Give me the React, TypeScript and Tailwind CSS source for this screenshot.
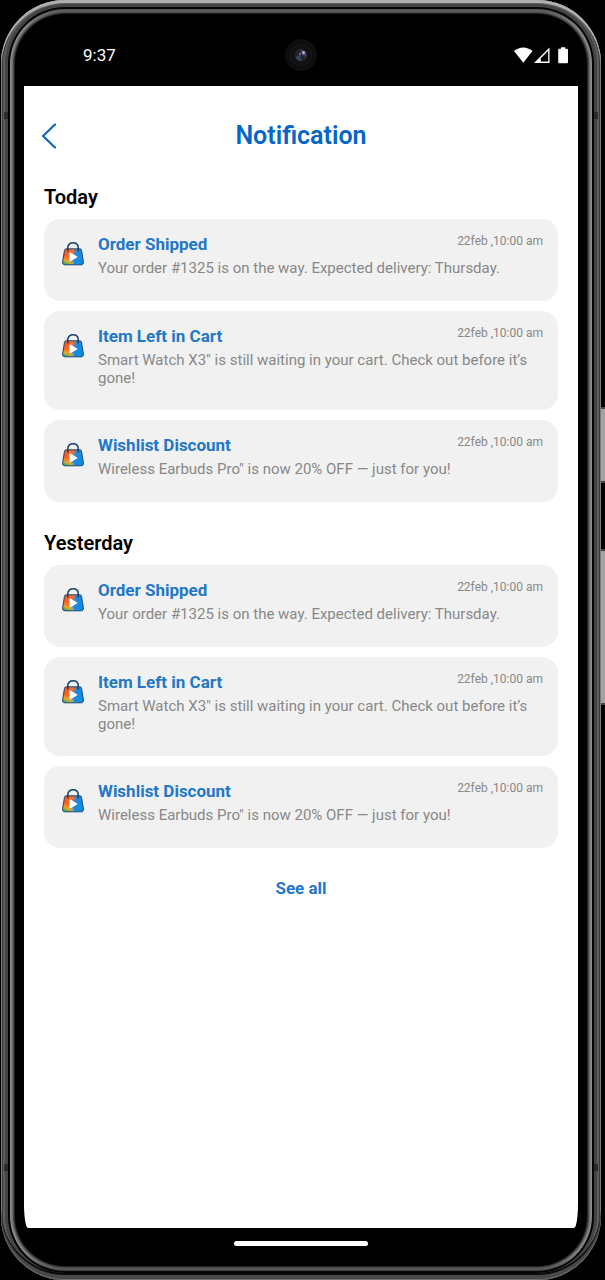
import React from "react";

type Notice = { title: string; body: string; time: string };
type Group = { day: string; items: Notice[] };

const notices: Notice[] = [
  {
    title: "Order Shipped",
    body: "Your order #1325 is on the way. Expected delivery: Thursday.",
    time: "22feb ,10:00 am",
  },
  {
    title: "Item Left in Cart",
    body: "Smart Watch X3\" is still waiting in your cart. Check out before it’s gone!",
    time: "22feb ,10:00 am",
  },
  {
    title: "Wishlist Discount",
    body: "Wireless Earbuds Pro\" is now 20% OFF — just for you!",
    time: "22feb ,10:00 am",
  },
];

const groups: Group[] = [
  { day: "Today", items: notices },
  { day: "Yesterday", items: notices },
];

function BagIcon() {
  return (
    <svg viewBox="0 0 22 24" className="h-6 w-[22px]" aria-hidden="true">
      <defs>
        <linearGradient id="bagBase" x1="0" y1="0.2" x2="1" y2="0.5">
          <stop offset="0" stopColor="#f4511e" />
          <stop offset="0.42" stopColor="#f9702a" />
          <stop offset="0.62" stopColor="#2187dd" />
          <stop offset="1" stopColor="#0a8fe8" />
        </linearGradient>
        <linearGradient id="bagGlow" x1="0.6" y1="0" x2="0.3" y2="1">
          <stop offset="0.5" stopColor="#f9b21a" stopOpacity="0" />
          <stop offset="0.8" stopColor="#d9b52c" stopOpacity="0.85" />
          <stop offset="1" stopColor="#23a96b" />
        </linearGradient>
      </defs>
      <path
        d="M4.300 6.800h13.400c1 0 1.600.5 1.800 1.400l1.900 11.700c.2 1.800-.7 2.900-2.400 2.900H3c-1.700 0-2.600-1.100-2.400-2.900l1.900-11.700c.2-.9.8-1.400 1.800-1.400z"
        fill="url(#bagBase)"
      />
      <path d="M3 7.500h7.500l1.500 15H3c-1.700 0-2.400-1.100-2.200-2.600z" fill="url(#bagGlow)" />
      <path
        d="M4.300 6.800h13.400c1 0 1.600.5 1.800 1.400l1.900 11.700c.2 1.800-.7 2.900-2.400 2.900H3c-1.700 0-2.600-1.100-2.400-2.900l1.900-11.700c.2-.9.8-1.400 1.800-1.400z"
        fill="none"
        stroke="#1c4a78"
        strokeWidth="1"
      />
      <path d="M5.800 9V5.600C5.800 2.600 8 .8 11 .8s5.200 1.800 5.200 4.800V9" fill="none" stroke="#143f70" strokeWidth="1.500" strokeLinecap="round" />
      <path d="M7.500 11v7.800c0 .6.500.8 1 .5l6.500-3.800c.5-.3.500-.8 0-1.100l-6.500-3.900c-.5-.3-1 0-1 .5z" fill="#fff" />
    </svg>
  );
}

function StatusBar() {
  return (
    <header className="grid h-[86px] grid-cols-3 items-center px-[9px] pt-6 pb-0 text-white">
      <time className="pl-[50px] text-[17px] leading-[62px]">9:37</time>
      <svg viewBox="0 0 34 34" className="h-[34px] w-[34px] justify-self-center" aria-hidden="true">
        <circle cx="17" cy="17" r="16" fill="#0e0e0e" />
        <circle cx="17" cy="17" r="10.500" fill="#111" stroke="#1c1c1c" strokeWidth="0.800" />
        <circle cx="17" cy="17" r="6.500" fill="#20232c" />
        <path d="M11.500 19a6 6 0 0 0 6 4l-1-6z" fill="#2e4a5c" />
        <path d="M16.500 12a6 6 0 0 1 6 7l-4-1z" fill="#4a3f66" />
        <circle cx="19.500" cy="14.500" r="1.500" fill="#b9b0cf" />
        <circle cx="16" cy="16" r="1.200" fill="#6b6488" />
      </svg>
      <svg viewBox="0 0 55 17" className="h-[17px] w-[55px] justify-self-end" aria-label="Wi-Fi, signal, battery" role="img">
        <path d="M0 4C5.500-.8 13-.8 18.500 4L9.300 15.700z" fill="#fff" />
        <path d="M35.500.5V16H20z" fill="#fff" />
        <path d="M34.200 3.800v10.800h-7.400V11.200z" fill="#000" />
        <path d="M47 .3h4.200v1.500h1.500c.8 0 1.300.5 1.300 1.300V15c0 .8-.5 1.300-1.300 1.300h-7.200c-.8 0-1.300-.5-1.300-1.300V3.100c0-.8.500-1.300 1.300-1.300H47z" fill="#fff" />
      </svg>
    </header>
  );
}

function NoticeCard({ title, body, time }: Notice) {
  return (
    <li className="flex min-h-[82px] items-start gap-3.5 rounded-2xl bg-[#f1f1f1] pt-3.5 pr-[15px] pb-[23px] pl-[18px]">
      <div className="pt-[9px]">
        <BagIcon />
      </div>
      <div className="min-w-0 flex-1">
        <div className="flex items-start justify-between">
          <h3 className="text-[17px] leading-[22px] font-bold text-[#1f78c8]">{title}</h3>
          <time className="text-[12px] leading-4 text-[#888]">{time}</time>
        </div>
        <p className="pt-1 text-[15px] leading-[18px] text-[#888]">{body}</p>
      </div>
    </li>
  );
}

export default function App() {
  return (
    <div className="relative min-h-screen bg-black pr-1 pl-px font-[Roboto,sans-serif]">
      <span className="absolute top-[407px] right-0 h-[76px] w-1 border-y-2 border-[#444] bg-[#a2a2a2]" />
      <span className="absolute top-[549px] right-0 h-[156px] w-1 border-y-2 border-[#444] bg-[#a2a2a2]" />
      <div className="relative flex min-h-screen flex-col rounded-[64px] bg-black px-[23px] shadow-[inset_0_3px_0_#b0b0b0,inset_0_-1px_0_#707070,inset_0_-5px_0_#484848,inset_0_-7px_0_#0a0a0a,inset_0_0_0_1px_#7c7c7c,inset_0_0_0_2px_#3a3a3a,inset_0_0_0_4px_#5e5e5e,inset_0_0_0_7px_#444,inset_0_0_0_9px_#050505,inset_0_-13px_3px_-2px_#3c3c3c,inset_0_13px_3px_-2px_#4a4a4a,inset_0_0_0_10px_#8d8d8d,inset_0_0_0_11px_#808080,inset_0_0_0_12px_#6a6a6a,inset_0_0_0_13px_#484848,inset_0_0_0_14px_#222]">
        <span className="absolute top-28 left-[3px] h-[7px] w-1 bg-[#2c2c2c]" />
        <span className="absolute top-28 right-[3px] h-[7px] w-1 bg-[#2c2c2c]" />
        <span className="absolute bottom-[109px] left-[3px] h-[7px] w-1 bg-[#2c2c2c]" />
        <span className="absolute right-[3px] bottom-[109px] h-[7px] w-1 bg-[#2c2c2c]" />
        <StatusBar />
        <div className="flex flex-1 flex-col bg-white px-5 [border-bottom-left-radius:4px_24px] [border-bottom-right-radius:4px_24px]">
          <div className="grid grid-cols-[1fr_auto_1fr] items-center pt-8 pb-0.5">
            <button type="button" aria-label="Back" className="-ml-1 w-6">
              <svg viewBox="0 0 24 36" className="h-9 w-6" fill="none" stroke="#0d66bd" strokeWidth="2.200" strokeLinecap="round" strokeLinejoin="round" aria-hidden="true">
                <path d="M15 6.500 3 18l12 11.500" />
              </svg>
            </button>
            <h1 className="text-[25px] leading-9 font-semibold text-[#0566c8]">Notification</h1>
          </div>
          <main>
            {groups.map((group) => (
              <section key={group.day} className="pt-[27px]">
                <h2 className="text-[20px] leading-7 font-semibold text-black">{group.day}</h2>
                <ul className="flex flex-col gap-2.5 pt-2">
                  {group.items.map((item) => (
                    <NoticeCard key={item.title} {...item} />
                  ))}
                </ul>
              </section>
            ))}
            <div className="flex justify-center pt-7">
              <a href="#all" className="text-[17px] leading-6 font-bold text-[#1f78c8]">
                See all
              </a>
            </div>
          </main>
        </div>
        <footer className="flex h-[52px] items-start justify-center pt-[13px]">
          <span className="h-[5px] w-[134px] rounded-full bg-white" />
        </footer>
      </div>
    </div>
  );
}
